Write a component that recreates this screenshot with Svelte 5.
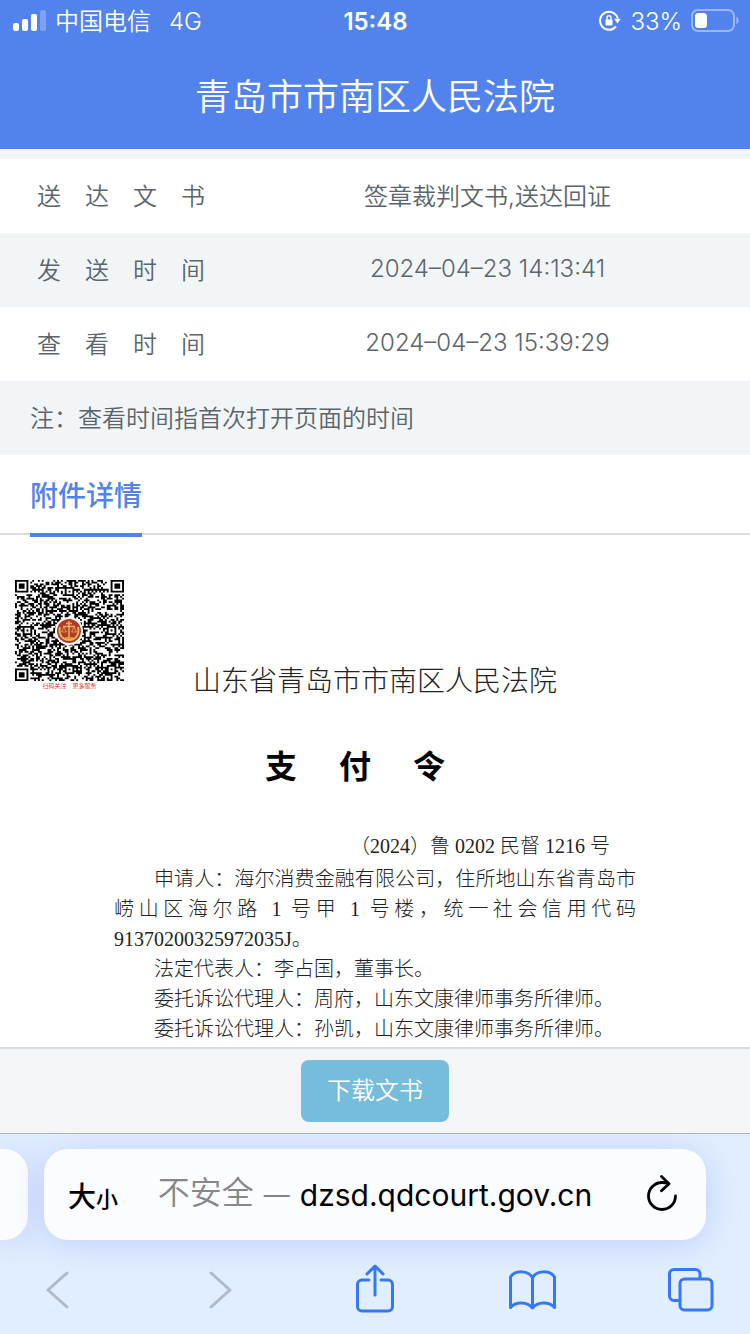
<script>
  const records = [
    { label: '送　达　文　书', value: '签章裁判文书,送达回证' },
    { label: '发　送　时　间', value: '2024–04–23 14:13:41' },
    { label: '查　看　时　间', value: '2024–04–23 15:39:29' }
  ];

  const paragraphs = [
    '申请人：海尔消费金融有限公司，住所地山东省青岛市崂山区海尔路 1 号甲 1 号楼，统一社会信用代码 91370200325972035J。',
    '法定代表人：李占国，董事长。',
    '委托诉讼代理人：周府，山东文康律师事务所律师。',
    '委托诉讼代理人：孙凯，山东文康律师事务所律师。'
  ];

  const SIZE = 57;
  const finders = [[3, 3], [53, 3], [3, 53]];
  const aligners = [[28, 6], [6, 28], [50, 28], [28, 50], [50, 50]];

  function buildCode() {
    let seed = 20240423;
    let d = '';
    for (let y = 0; y < SIZE; y++) {
      for (let x = 0; x < SIZE; x++) {
        // xorshift
        seed ^= seed << 13;
        seed ^= seed >>> 17;
        seed ^= seed << 5;
        let dark = (seed >>> 0) / 4294967296 < 0.52;
        if (x === 6) dark = y % 2 === 0;
        if (y === 6) dark = x % 2 === 0;
        for (const [cx, cy] of aligners) {
          const r = Math.max(Math.abs(x - cx), Math.abs(y - cy));
          if (r <= 2) dark = r !== 1;
        }
        for (const [cx, cy] of finders) {
          const r = Math.max(Math.abs(x - cx), Math.abs(y - cy));
          if (r <= 4) dark = r !== 2 && r !== 4;
        }
        if (dark) d += `M${x} ${y}h1v1h-1z`;
      }
    }
    return d;
  }

  const codePath = buildCode();
</script>

<div class="screen">
  <header>
    <div class="status">
      <div class="status-side">
        <svg width="34" height="22" viewBox="0 0 34 22" fill="#fff" aria-hidden="true">
          <rect x="1" y="13" width="6" height="8" rx="2" />
          <rect x="10" y="9" width="6" height="12" rx="2" />
          <rect x="19" y="4" width="6" height="17" rx="2" />
          <rect x="28" y="0" width="6" height="21" rx="2" opacity="0.25" />
        </svg>
        <span class="carrier">中国电信</span>
        <span class="network">4G</span>
      </div>
      <span class="clock">15:48</span>
      <div class="status-side right">
        <svg width="22" height="22" viewBox="0 0 22 22" fill="none" stroke="#fff" stroke-width="2" aria-hidden="true">
          <path d="M17 16.500A9 9 0 1 1 18.800 8.500" />
          <path d="M15.200 8.800h6.600l-3.300 4.600z" fill="#fff" stroke="none" />
          <rect x="6.500" y="9.500" width="7" height="6" rx="0.8" fill="#fff" stroke="none" />
          <path d="M8 10V7.800a2 2 0 0 1 4 0V10" stroke-width="1.400" />
        </svg>
        <span>33%</span>
        <svg width="48" height="24" viewBox="0 0 48 24" aria-hidden="true">
          <rect x="1" y="1" width="42" height="21" rx="6" fill="none" stroke="#fff" stroke-opacity="0.42" stroke-width="2" />
          <rect x="4" y="4" width="12" height="15" rx="3.500" fill="#fff" />
          <path d="M45.500 8c2.600 1.200 2.600 6 0 7.200z" fill="#fff" opacity="0.5" />
        </svg>
      </div>
    </div>
    <h1>青岛市市南区人民法院</h1>
  </header>

  <main>
    <table>
      <tbody>
        {#each records as record}
          <tr>
            <th scope="row">{record.label}</th>
            <td>{record.value}</td>
          </tr>
        {/each}
        <tr>
          <td class="note" colspan="2">注：查看时间指首次打开页面的时间</td>
        </tr>
      </tbody>
    </table>

    <div class="tabs">
      <h2>附件详情</h2>
    </div>

    <article>
      <div class="letterhead">
        <figure>
          <svg viewBox="0 0 109 101" role="img" aria-label="二维码">
            <svg width="109" height="101" viewBox="0 0 57 57" preserveAspectRatio="none">
              <path d={codePath} />
            </svg>
            <circle cx="54" cy="51" r="14" fill="#fff" />
            <circle cx="54" cy="51" r="12" fill="#b23a26" />
            <g fill="none" stroke="#e3b25c">
              <path d="M45 47c-2 8 3 13 9 13s11-5 9-13" stroke-width="2" />
              <path d="M54 41v17M48 46.500h12M51 43.500h6M50 58h8" stroke-width="1.500" />
              <path d="M49 47l-2.500 5h5zM59 47l-2.500 5h5z" stroke-width="0.800" />
            </g>
          </svg>
          <figcaption>扫码关注　更多服务</figcaption>
        </figure>
        <h3>山东省青岛市市南区人民法院</h3>
      </div>
      <h4><span>支</span><span>付</span><span>令</span></h4>
      <div class="text">
        <p class="case">（2024）鲁 0202 民督 1216 号</p>
        {#each paragraphs as paragraph}
          <p>{paragraph}</p>
        {/each}
      </div>
    </article>

    <div class="download">
      <button type="button">下载文书</button>
    </div>
  </main>

  <footer>
    <div class="cards">
      <div class="card previous"></div>
      <div class="card address">
        <button type="button" class="size" aria-label="大小">大<small>小</small></button>
        <button type="button" class="url">
          <span class="warning">不安全</span>
          <span class="dash">—</span>
          <span>dzsd.qdcourt.gov.cn</span>
        </button>
        <button type="button" aria-label="重新载入">
          <svg width="36" height="40" viewBox="0 0 36 40" fill="none" stroke="#000" stroke-width="2.800" stroke-linecap="round" stroke-linejoin="round">
            <path d="M31.500 21A13.500 13.500 0 1 1 18 7.500c2.500 0 4.500 0.400 6.500 1.200M17.500 1.500l7.500 7.200-7.500 7" />
          </svg>
        </button>
      </div>
    </div>
    <nav>
      <button type="button" aria-label="后退">
        <svg viewBox="0 0 64 56"><path class="muted" d="M41 11L22 28l19 17" /></svg>
      </button>
      <button type="button" aria-label="前进">
        <svg viewBox="0 0 64 56"><path class="muted" d="M26 11l19 17-19 17" /></svg>
      </button>
      <button type="button" aria-label="分享">
        <svg viewBox="0 0 64 56">
          <path d="M26 18h-7a4.500 4.500 0 0 0-4.500 4.500v22A4.500 4.500 0 0 0 19 49h26a4.500 4.500 0 0 0 4.500-4.500v-22A4.500 4.500 0 0 0 45 18h-7M32 33V4.500M24 12l8-8 8 8" />
        </svg>
      </button>
      <button type="button" aria-label="书签">
        <svg viewBox="0 0 64 56">
          <path d="M30.500 16C27 8 13 8 8.500 15v30.500c5-6 17-6 22 0.500c5-6.500 17-6.500 22-0.500V15C48 8 34 8 30.500 16zM30.500 16v30" />
        </svg>
      </button>
      <button type="button" aria-label="标签页">
        <svg viewBox="0 0 64 56">
          <path d="M40 16.500V12a4.500 4.500 0 0 0-4.500-4.500H14A4.500 4.500 0 0 0 9.500 12v22a4.500 4.500 0 0 0 4.500 4.500h5" />
          <rect x="20" y="17" width="32" height="31" rx="4.500" />
        </svg>
      </button>
    </nav>
  </footer>
</div>

<style>
  :global(body) {
    margin: 0;
  }

  .screen {
    font-family: Inter, 'Noto Sans CJK SC', sans-serif;
    font-size: 24px;
    font-weight: 350;
    color: #5a656c;
    background: #fff;
  }

  h1, h2, h3, h4, p, figure {
    margin: 0;
    font-weight: 350;
  }

  button {
    padding: 0;
    border: 0;
    background: none;
    font: inherit;
    color: inherit;
  }

  svg {
    display: block;
  }

  header {
    border-bottom: 10px solid #f1f5f8;
    color: #fff;
    background: #5283ec;
  }

  .status {
    display: grid;
    grid-template-columns: 1fr auto 1fr;
    align-items: center;
    height: 42px;
    padding: 0 11px 0 12px;
  }

  .status-side {
    display: flex;
    align-items: center;
    gap: 9px;
  }

  .right {
    justify-content: flex-end;
  }

  .carrier {
    padding-bottom: 4px;
  }

  .network {
    margin-left: 9px;
  }

  .clock {
    font-weight: 600;
  }

  h1 {
    padding-top: 3px;
    font-size: 36px;
    line-height: 104px;
    text-align: center;
  }

  table {
    width: 100%;
    table-layout: fixed;
    border-collapse: collapse;
  }

  tr:nth-child(even) {
    background: #f1f5f8;
  }

  th,
  td {
    box-sizing: border-box;
    height: 74px;
    padding: 0 0 4px;
    text-align: center;
    font-weight: 350;
  }

  th {
    width: 30%;
    padding-left: 37px;
    text-align: left;
    white-space: nowrap;
  }

  .note {
    padding-left: 30px;
    text-align: left;
  }

  .tabs {
    display: flex;
    height: 78px;
    padding: 0 30px;
    border-bottom: 2px solid #dcdcdc;
  }

  h2 {
    height: 78px;
    border-bottom: 4px solid #5283ec;
    font-size: 28px;
    font-weight: 500;
    line-height: 82px;
    color: #5283ec;
  }

  article {
    padding: 45px 0 3px;
    font-family: 'Liberation Serif', 'Noto Sans CJK SC', serif;
    color: #222;
  }

  .letterhead {
    display: grid;
    grid-template-columns: 1fr auto 1fr;
    padding: 0 15px;
  }

  figure {
    width: 109px;
  }

  figcaption {
    font-size: 6px;
    line-height: 10px;
    text-align: center;
    color: #e11;
  }

  h3 {
    align-self: end;
    padding-top: 84px;
    font-size: 28px;
    font-weight: 300;
    line-height: 36px;
  }

  h4 {
    display: flex;
    justify-content: center;
    gap: 42px;
    margin-top: 45px;
    padding-right: 40px;
    font-size: 32px;
    font-weight: 700;
    line-height: 44px;
    color: #000;
  }

  .text {
    padding: 42px 114px 0;
    font-size: 20px;
    line-height: 30px;
  }

  p {
    font-weight: 300;
    text-indent: 40px;
    text-align: justify;
  }

  .case {
    padding: 0 26px 3px 0;
    text-align: right;
  }

  .download {
    display: flex;
    justify-content: center;
    padding: 11px 0;
    border-top: 2px solid #dadbdc;
    background: #f4f5f7;
  }

  .download button {
    padding: 0 26px;
    border-radius: 8px;
    line-height: 62px;
    color: #fff;
    background: #76bcdb;
  }

  footer {
    overflow: hidden;
    border-top: 1px solid #aab4c8;
    background: #e0eeff;
  }

  .cards {
    display: flex;
    gap: 16px;
    padding: 15px 44px 0 0;
  }

  .card {
    height: 91px;
    border-radius: 24px;
    background: #fafcff;
    box-shadow: 0 4px 32px rgba(150, 160, 240, 0.4);
  }

  .previous {
    width: 28px;
    border-radius: 0 24px 24px 0;
  }

  .address {
    flex: 1;
    display: flex;
    align-items: center;
    justify-content: space-between;
    box-sizing: border-box;
    padding: 0 26px 0 24px;
    color: #000;
  }

  .size {
    font-size: 28px;
    font-weight: 500;
  }

  small {
    font-size: 22px;
  }

  .url {
    display: flex;
    align-items: center;
    gap: 10px;
    margin-right: 12px;
    font-size: 30px;
    font-weight: 400;
    line-height: 48px;
  }

  .warning {
    padding-bottom: 4px;
    font-size: 32px;
    font-weight: 350;
    color: #85878c;
  }

  .dash {
    font-size: 26px;
    color: #85878c;
  }

  nav {
    display: flex;
    justify-content: space-between;
    padding: 22px 26px 16px;
  }

  nav svg {
    width: 64px;
    height: 56px;
    fill: none;
    stroke: #3478f6;
    stroke-width: 3;
    stroke-linecap: round;
    stroke-linejoin: round;
  }

  .muted {
    stroke: #b0b9cb;
  }
</style>
